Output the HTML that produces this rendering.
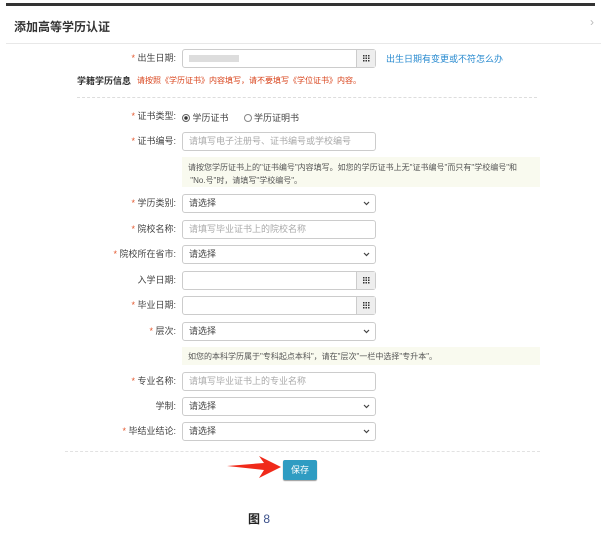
<!DOCTYPE html>
<html><head><meta charset="utf-8"><style>
*{margin:0;padding:0;box-sizing:border-box}
body{width:601px;height:533px;background:#fff;position:relative;overflow:hidden;font-family:"Liberation Sans","Noto Sans CJK SC",sans-serif;font-size:9px;color:#555}
.a{position:absolute;white-space:nowrap}
.lab{position:absolute;right:425px;text-align:right;line-height:18px;color:#444}
.lab i{color:#e4572e;font-style:normal}
.in{position:absolute;left:182px;width:194px;height:19px;border:1px solid #ccc;border-radius:3px;background:#fff;line-height:17px;padding-left:6px;color:#aaa}
.sel{color:#444}
.sel svg{position:absolute;right:5px;top:6px}
.cal{position:absolute;right:0;top:0;width:19px;height:17px;background:#eee;border-left:1px solid #ccc}
.cal:after{content:"";position:absolute;left:6px;top:5px;width:7px;height:7px;background:repeating-linear-gradient(90deg,#333 0 2px,transparent 2px 2.5px),#fff;background-image:linear-gradient(#333,#333);-webkit-mask:repeating-linear-gradient(90deg,#000 0 1.5px,transparent 1.5px 2.5px),repeating-linear-gradient(#000 0 1.5px,transparent 1.5px 2.5px);-webkit-mask-composite:source-in;mask-composite:intersect}
.tip{position:absolute;left:182px;width:358px;background:#f9faef;color:#555;font-size:8px;padding:4px 6px;line-height:13px}
</style></head><body>
<div class="a" style="left:6px;top:3px;width:589px;height:3px;background:#333"></div>
<div class="a" style="left:14px;top:18px;font-size:12px;color:#333;font-weight:bold">添加高等学历认证</div>
<div class="a" style="left:590px;top:15px;color:#bbb;font-size:12px">›</div>
<div class="a" style="left:6px;top:43px;width:595px;height:1px;background:#e8e8e8"></div>

<div class="lab" style="top:49px"><i>*</i> 出生日期:</div>
<div class="in" style="top:49px"><span style="display:inline-block;margin-top:5px;width:50px;height:7px;background:#ddd"></span><div class="cal"></div></div>
<div class="a" style="left:386px;top:52px;color:#2a8bd0">出生日期有变更或不符怎么办</div>

<div class="a" style="left:77px;top:74px;font-weight:bold;color:#333">学籍学历信息</div>
<div class="a" style="left:137px;top:75px;color:#d9441c;font-size:8px">请按照《学历证书》内容填写，请不要填写《学位证书》内容。</div>
<div class="a" style="left:77px;top:97px;width:460px;border-top:1px dashed #ddd"></div>

<div class="lab" style="top:107px"><i>*</i> 证书类型:</div>
<div class="a" style="left:182px;top:111px;color:#444"><span style="display:inline-block;width:8px;height:8px;border:1px solid #666;border-radius:50%;vertical-align:-1px;background:radial-gradient(#333 40%,#fff 45%)"></span> 学历证书&nbsp;&nbsp;&nbsp;&nbsp;&nbsp;&nbsp;<span style="display:inline-block;width:8px;height:8px;border:1px solid #888;border-radius:50%;vertical-align:-1px"></span> 学历证明书</div>

<div class="lab" style="top:132px"><i>*</i> 证书编号:</div>
<div class="in" style="top:132px">请填写电子注册号、证书编号或学校编号</div>
<div class="tip" style="top:157px;height:30px">请按您学历证书上的"证书编号"内容填写。如您的学历证书上无"证书编号"而只有"学校编号"和<br>&nbsp;"No.号"时，请填写"学校编号"。</div>

<div class="lab" style="top:194px"><i>*</i> 学历类别:</div>
<div class="in sel" style="top:194px">请选择<svg width="7" height="5"><path d="M1 1 L3.5 3.5 L6 1" stroke="#444" fill="none" stroke-width="1.2"/></svg></div>
<div class="lab" style="top:220px"><i>*</i> 院校名称:</div>
<div class="in" style="top:220px">请填写毕业证书上的院校名称</div>
<div class="lab" style="top:245px"><i>*</i> 院校所在省市:</div>
<div class="in sel" style="top:245px">请选择<svg width="7" height="5"><path d="M1 1 L3.5 3.5 L6 1" stroke="#444" fill="none" stroke-width="1.2"/></svg></div>
<div class="lab" style="top:271px">入学日期:</div>
<div class="in" style="top:271px"><div class="cal"></div></div>
<div class="lab" style="top:296px"><i>*</i> 毕业日期:</div>
<div class="in" style="top:296px"><div class="cal"></div></div>
<div class="lab" style="top:322px"><i>*</i> 层次:</div>
<div class="in sel" style="top:322px">请选择<svg width="7" height="5"><path d="M1 1 L3.5 3.5 L6 1" stroke="#444" fill="none" stroke-width="1.2"/></svg></div>
<div class="tip" style="top:347px;height:18px;padding-top:3px">如您的本科学历属于"专科起点本科"，请在"层次"一栏中选择"专升本"。</div>
<div class="lab" style="top:372px"><i>*</i> 专业名称:</div>
<div class="in" style="top:372px">请填写毕业证书上的专业名称</div>
<div class="lab" style="top:397px">学制:</div>
<div class="in sel" style="top:397px">请选择<svg width="7" height="5"><path d="M1 1 L3.5 3.5 L6 1" stroke="#444" fill="none" stroke-width="1.2"/></svg></div>
<div class="lab" style="top:422px"><i>*</i> 毕结业结论:</div>
<div class="in sel" style="top:422px">请选择<svg width="7" height="5"><path d="M1 1 L3.5 3.5 L6 1" stroke="#444" fill="none" stroke-width="1.2"/></svg></div>

<div class="a" style="left:65px;top:451px;width:475px;border-top:1px dashed #e2e2e2"></div>
<svg class="a" style="left:226px;top:455px" width="56" height="24"><path d="M1 11 L38 8 L33 1 L55 12 L33 23 L38 15 Z" fill="#f02a1a"/></svg>
<div class="a" style="left:283px;top:460px;width:34px;height:20px;background:#2f9cc2;border-radius:2px;color:#fff;text-align:center;line-height:20px;font-size:9px;box-shadow:0 1px 1px #999">保存</div>
<div class="a" style="left:248px;top:510px;font-size:12px;color:#3a4f8a"><b style="color:#222">图</b> 8</div>
</body></html>
